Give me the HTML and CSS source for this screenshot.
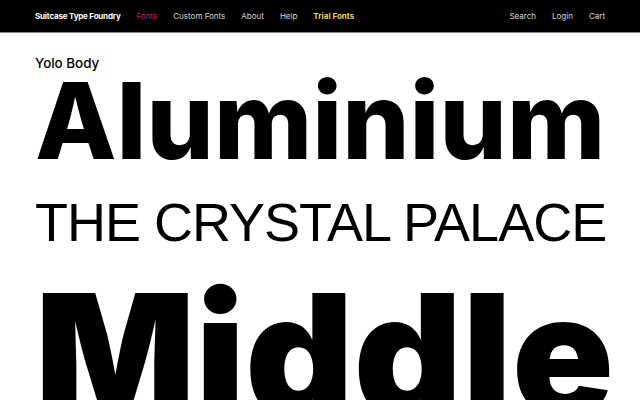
FILE: index.html
```html
<!DOCTYPE html>
<html lang="en">
<head>
<meta charset="utf-8">
<title>Yolo Body — Suitcase Type Foundry</title>
<link rel="stylesheet" href="styles.css">
</head>
<body>
<header class="nav">
  <div class="nav-left">
    <a class="brand" href="#">Suitcase Type Foundry</a>
    <a class="link active" href="#">Fonts</a>
    <a class="link" href="#">Custom Fonts</a>
    <a class="link" href="#">About</a>
    <a class="link" href="#">Help</a>
    <a class="link trial" href="#">Trial Fonts</a>
  </div>
  <div class="nav-right">
    <a class="link" href="#">Search</a>
    <a class="link" href="#">Login</a>
    <a class="link" href="#">Cart</a>
  </div>
</header>
<main class="specimen">
  <div class="label">Yolo Body</div>
  <div class="big">Aluminium</div>
  <div class="caps">THE CRYSTAL PALACE</div>
  <div class="huge">Middle</div>
</main>
</body>
</html>
```
FILE: styles.css
```css
* { box-sizing: border-box; }
html, body { margin: 0; padding: 0; }
body {
  background: #fff;
  color: #000;
  font-family: Inter, "Liberation Sans", sans-serif;
  width: 640px;
  height: 400px;
  overflow: hidden;
}
.nav {
  height: 33px;
  background: #000;
  border-bottom: 1px solid #8a8a8a;
  display: flex;
  align-items: center;
  justify-content: space-between;
  padding: 0 35px;
  font-size: 8px;
}
.nav a { text-decoration: none; }
.nav-left, .nav-right { display: flex; align-items: center; gap: 16px; }
.brand { color: #fff; font-weight: 700; letter-spacing: -0.2px; }
.link { color: #d8d8d8; }
.link.active { color: #d2177a; }
.link.trial { color: #ecd24a; font-weight: 700; }
.specimen { padding: 0 35px; }
.label {
  font-size: 13.4px;
  font-weight: 500;
  margin-top: 22px;
  line-height: 16px;
}
.big {
  font-size: 106px;
  font-weight: 800;
  line-height: 100px;
  letter-spacing: 0;
  white-space: nowrap;
}
.caps {
  font-family: "Liberation Sans", sans-serif;
  font-size: 54px;
  line-height: 60px;
  letter-spacing: -1px;
  margin-top: 21px;
  white-space: nowrap;
}
.huge {
  font-size: 168px;
  font-weight: 900;
  line-height: 1;
  letter-spacing: 0;
  margin-top: 18px;
  white-space: nowrap;
}
```
